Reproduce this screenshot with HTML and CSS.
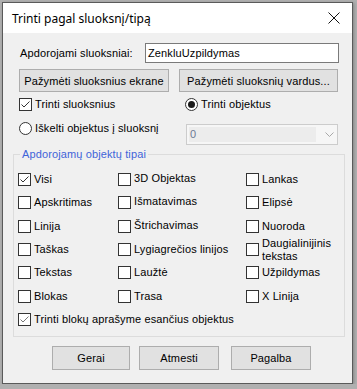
FILE: index.html
```html
<!doctype html>
<html lang="lt">
  <head>
    <meta charset="UTF-8" />
    <meta name="viewport" content="width=device-width, initial-scale=1" />
    <link rel="stylesheet" href="styles.css">
  </head>
  <body>
    <div class="win">
      <div class="titlebar">
        <span class="titlebar__text">Trinti pagal sluoksnį/tipą</span>
        <svg class="titlebar__close" width="12" height="12" viewBox="0 0 12 12">
          <path d="M0.5 0.5 L11.5 11.5 M11.5 0.5 L0.5 11.5" stroke="#111" stroke-width="1" fill="none" />
        </svg>
      </div>

      <div class="content">
        <div class="layer-row">
          <span class="layer-row__label">Apdorojami sluoksniai:</span>
          <div class="textbox">ZenkluUzpildymas</div>
        </div>

        <div class="btn-row">
          <button class="btn btn--screen">Pažymėti sluoksnius ekrane</button>
          <button class="btn btn--names">Pažymėti sluoksnių vardus...</button>
        </div>

        <div class="mode-grid">
          <div class="opt">
            <span class="cb is-checked"><svg width="11" height="11" viewBox="0 0 11 11"><path d="M1.5 5.5 L4 8 L9.5 2.5" /></svg></span>
            <span>Trinti sluoksnius</span>
          </div>
          <div class="opt opt--right">
            <span class="rb is-checked"></span>
            <span>Trinti objektus</span>
          </div>
          <div class="opt opt--move">
            <span class="rb"></span>
            <span>Iškelti objektus į sluoksnį</span>
          </div>
          <div class="combo">
            <span class="combo__field">0</span>
            <svg class="combo__arrow" width="9" height="5" viewBox="0 0 9 5"><path d="M0.5 0.5 L4.5 4.5 L8.5 0.5" /></svg>
          </div>
        </div>

        <fieldset class="group">
          <legend class="group__title">Apdorojamų objektų tipai</legend>
          <div class="type-grid">
            <div class="opt"><span class="cb is-checked"><svg width="11" height="11" viewBox="0 0 11 11"><path d="M1.5 5.5 L4 8 L9.5 2.5" /></svg></span><span>Visi</span></div>
            <div class="opt opt--up"><span class="cb"></span><span>3D Objektas</span></div>
            <div class="opt"><span class="cb"></span><span>Lankas</span></div>

            <div class="opt"><span class="cb"></span><span>Apskritimas</span></div>
            <div class="opt opt--up"><span class="cb"></span><span>Išmatavimas</span></div>
            <div class="opt"><span class="cb"></span><span>Elipsė</span></div>

            <div class="opt"><span class="cb"></span><span>Linija</span></div>
            <div class="opt opt--up"><span class="cb"></span><span>Štrichavimas</span></div>
            <div class="opt"><span class="cb"></span><span>Nuoroda</span></div>

            <div class="opt"><span class="cb"></span><span>Taškas</span></div>
            <div class="opt"><span class="cb"></span><span>Lygiagrečios linijos</span></div>
            <div class="opt"><span class="cb"></span><span class="opt__wrap">Daugialinijinis tekstas</span></div>

            <div class="opt"><span class="cb"></span><span>Tekstas</span></div>
            <div class="opt"><span class="cb"></span><span>Laužtė</span></div>
            <div class="opt"><span class="cb"></span><span>Užpildymas</span></div>

            <div class="opt"><span class="cb"></span><span>Blokas</span></div>
            <div class="opt"><span class="cb"></span><span>Trasa</span></div>
            <div class="opt"><span class="cb"></span><span>X Linija</span></div>

            <div class="opt opt--full"><span class="cb is-checked is-dim"><svg width="11" height="11" viewBox="0 0 11 11"><path d="M1.5 5.5 L4 8 L9.5 2.5" /></svg></span><span>Trinti blokų aprašyme esančius objektus</span></div>
          </div>
        </fieldset>

        <div class="footer">
          <button class="btn btn--ok">Gerai</button>
          <button class="btn btn--cancel">Atmesti</button>
          <button class="btn btn--help">Pagalba</button>
        </div>
      </div>
    </div>
  </body>
</html>
```

FILE: styles.css
```css
body {
  margin: 0;
  background-color: #b0b0b0;
  font: 11px/13px "Liberation Sans", Arial, sans-serif;
  letter-spacing: 0.12px;
  color: #000;
}

.win {
  margin: 2px 0 0 2px;
  width: 349px;
  height: 380px;
  border: 1px solid #5a5a5a;
  background-color: #f0f0f0;
  display: flex;
  flex-direction: column;
  box-shadow: 1px 1px 3px rgba(0, 0, 0, 0.25);
}

/* title bar */
.titlebar {
  height: 30px;
  background-color: #fff;
  display: flex;
  align-items: center;
  padding-left: 9px;
  padding-right: 12px;
}

.titlebar__text {
  font: 12px "Noto Sans", "Open Sans", sans-serif;
  letter-spacing: 0;
  color: #000;
  flex-grow: 1;
}

.titlebar__close {
  display: block;
}

/* content */
.content {
  padding: 10px 13px 0 16px;
}

.layer-row {
  display: flex;
  align-items: center;
  height: 20px;
}

.layer-row__label {
  margin-left: 1px;
}

.textbox {
  margin-left: auto;
  width: 194px;
  height: 20px;
  box-sizing: border-box;
  border: 1px solid #7a7a7a;
  background-color: #fff;
  padding: 0 2px;
  line-height: 18px;
}

.btn-row {
  display: flex;
  gap: 10px;
  margin-top: 6px;
}

.btn {
  height: 23px;
  box-sizing: border-box;
  border: 1px solid #adadad;
  background-color: #e1e1e1;
  font: 11px "Liberation Sans", Arial, sans-serif;
  letter-spacing: 0.12px;
  color: #000;
  padding: 0;
}

.btn--screen {
  width: 150px;
}

.btn--names {
  width: 159px;
}

/* options */
.opt {
  display: flex;
  align-items: center;
  gap: 3px;
}

.opt--up > span:last-child {
  margin-top: -2px;
}

.opt__wrap {
  width: 76px;
  line-height: 13px;
}

.cb,
.rb {
  flex: 0 0 13px;
  width: 13px;
  height: 13px;
  box-sizing: border-box;
  border: 1px solid #333;
  background-color: #fff;
  display: flex;
  align-items: center;
  justify-content: center;
}

.cb svg path {
  fill: none;
  stroke: #333;
  stroke-width: 1;
}

.cb.is-dim svg path {
  stroke: #777;
}

.rb {
  border-radius: 50%;
}

.rb.is-checked::after {
  content: "";
  width: 7px;
  height: 7px;
  border-radius: 50%;
  background-color: #1a1a1a;
}

.mode-grid {
  display: grid;
  grid-template-columns: 166px 1fr;
  margin-top: 6px;
  row-gap: 11px;
  align-items: start;
}

.combo {
  margin: 2px 0 0 1px;
  width: 152px;
  height: 21px;
  box-sizing: border-box;
  border: 1px solid #cccccc;
  background-color: #f6f6f6;
  display: flex;
  align-items: center;
  padding: 2px;
}

.combo__field {
  width: 126px;
  height: 15px;
  background-color: #ececec;
  color: #6d7a94;
  padding-left: 1px;
  line-height: 15px;
}

.combo__arrow {
  margin-left: 9px;
}

.combo__arrow path {
  fill: none;
  stroke: #a8a8a8;
}

/* group box */
.group {
  margin: 3px -6px 0;
  border: 1px solid #dcdcdc;
  padding: 7px 4px 5px;
  min-width: 0;
}

.group__title {
  color: #3f64d9;
  padding: 0 2px;
  margin-left: 2px;
  line-height: 13px;
}

.type-grid {
  display: grid;
  grid-template-columns: 100px 128px 1fr;
  grid-auto-rows: 23.33px;
  align-items: center;
}

.opt--full {
  grid-column: 1 / -1;
}

/* buttons */
.footer {
  display: flex;
  margin: 9px 0 0 33px;
}

.footer .btn {
  height: 24px;
}

.btn--ok {
  width: 78px;
}

.btn--cancel {
  width: 80px;
  margin-left: 9px;
}

.btn--help {
  width: 80px;
  margin-left: 12px;
}
```
